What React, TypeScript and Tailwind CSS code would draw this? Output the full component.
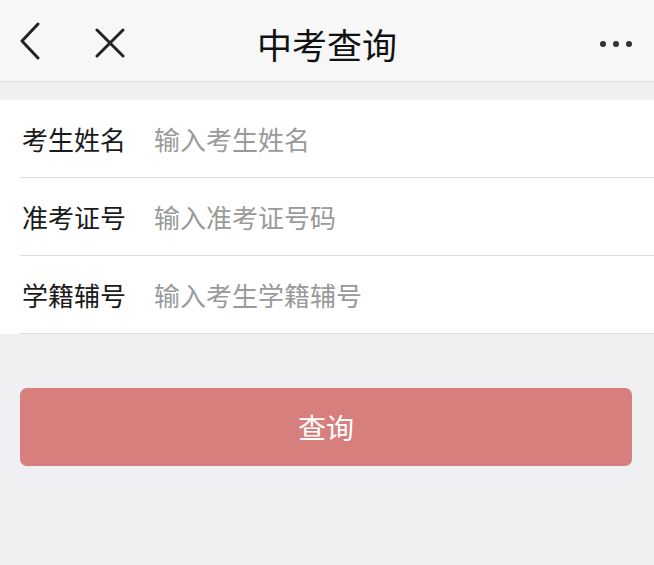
import { useState } from "react";

const fields = [
  { label: "考生姓名", placeholder: "输入考生姓名" },
  { label: "准考证号", placeholder: "输入准考证号码" },
  { label: "学籍辅号", placeholder: "输入考生学籍辅号" },
];

export default function App() {
  const [values, setValues] = useState<string[]>(["", "", ""]);

  return (
    <div
      className="w-[654px] h-[565px] bg-[#f0f0f3] flex flex-col"
      style={{ fontFamily: '"Noto Sans CJK SC", "Noto Sans", sans-serif' }}
    >
      {/* header */}
      <div className="h-[82px] bg-[#f7f7f7] border-b border-[#dcdcdc] flex flex-row items-center relative">
        <button className="ml-[16px] w-[28px] h-[40px] flex items-center justify-center">
          <svg width="26" height="38" viewBox="0 0 26 38" fill="none">
            <path d="M21 2 L5 19 L21 36" stroke="#222" strokeWidth="3" strokeLinecap="round" strokeLinejoin="round" />
          </svg>
        </button>
        <button className="ml-[50px] w-[32px] h-[32px] flex items-center justify-center mt-[4px]">
          <svg width="32" height="30" viewBox="0 0 32 30" fill="none">
            <path d="M3 2 L29 28 M29 2 L3 28" stroke="#222" strokeWidth="3" strokeLinecap="round" />
          </svg>
        </button>
        <p className="absolute left-0 right-0 text-center text-[35px] text-[#111] pointer-events-none leading-none top-[26px]">
          中考查询
        </p>
        <div className="ml-auto mr-[22px] mt-[6px] flex flex-row gap-[7px]">
          <span className="w-[6px] h-[6px] rounded-full bg-[#333]" />
          <span className="w-[6px] h-[6px] rounded-full bg-[#333]" />
          <span className="w-[6px] h-[6px] rounded-full bg-[#333]" />
        </div>
      </div>

      {/* form */}
      <div className="mt-[18px] bg-white flex flex-col">
        {fields.map((f, i) => (
          <label
            key={f.label}
            className="ml-[20px] h-[78px] flex flex-row items-center border-b border-[#dedede]"
          >
            <span className="w-[134px] pl-[2px] text-[26px] text-[#1a1a1a]">{f.label}</span>
            <input
              className="flex-1 outline-none text-[26px] text-[#1a1a1a] placeholder:text-[#9a9a9a] bg-transparent"
              placeholder={f.placeholder}
              value={values[i]}
              onChange={(e) => {
                const next = [...values];
                next[i] = e.target.value;
                setValues(next);
              }}
            />
          </label>
        ))}
      </div>

      <div className="px-[20px] mt-[54px]">
        <button className="w-[612px] h-[78px] rounded-[7px] bg-[#d77f7d] text-white text-[28px]">
          查询
        </button>
      </div>
    </div>
  );
}
